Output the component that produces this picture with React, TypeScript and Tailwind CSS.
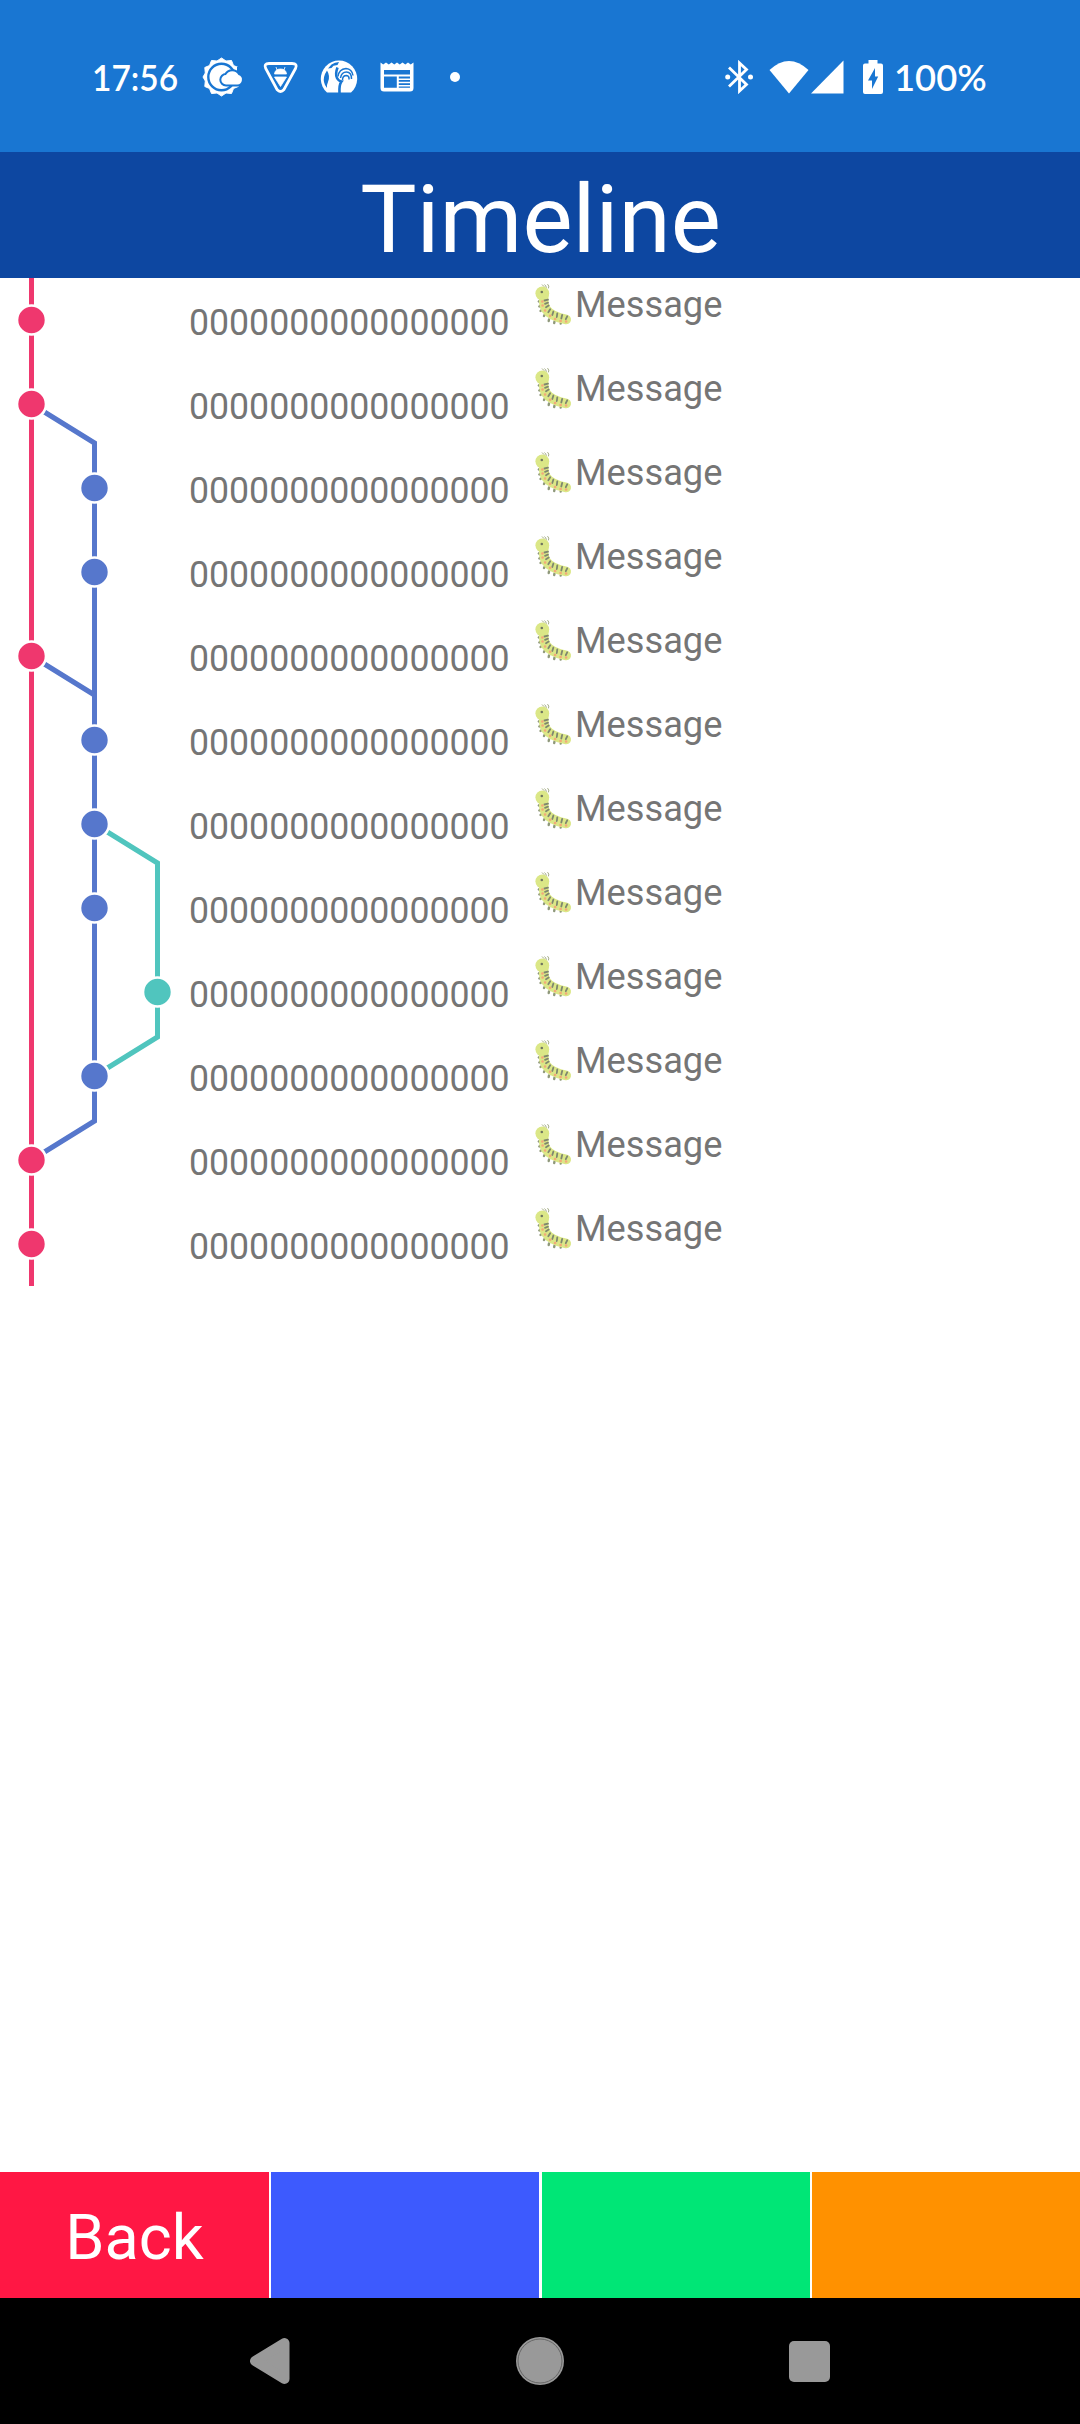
import React from "react";

const PINK = "#ef376e";
const BLUE = "#5677cc";
const TEAL = "#50c5be";

const LANES = [31.5, 94.5, 157.5];
const ROW = 84;

const commits = [
  { lane: 0, color: PINK },
  { lane: 0, color: PINK },
  { lane: 1, color: BLUE },
  { lane: 1, color: BLUE },
  { lane: 0, color: PINK },
  { lane: 1, color: BLUE },
  { lane: 1, color: BLUE },
  { lane: 1, color: BLUE },
  { lane: 2, color: TEAL },
  { lane: 1, color: BLUE },
  { lane: 0, color: PINK },
  { lane: 0, color: PINK },
];

function Graph() {
  return (
    <svg width="189" height="1008" viewBox="0 0 189 1008" className="shrink-0" fill="none" strokeWidth="5">
      <path d="M31.5 0V1008" stroke={PINK} />
      <path d="M31.5 126L94.5 165V843L31.5 882" stroke={BLUE} />
      <path d="M31.5 378L94.5 417V440" stroke={BLUE} />
      <path d="M94.5 546L157.5 585V759L94.5 798" stroke={TEAL} />
      {commits.map((c, i) => (
        <circle key={i} cx={LANES[c.lane]} cy={i * ROW + 42} r="14.5" fill={c.color} stroke="#fff" strokeWidth="2.6" />
      ))}
    </svg>
  );
}

function Caterpillar() {
  return (
    <svg width="55" height="52" viewBox="0 0 55 52" className="shrink-0" fill="none" strokeLinecap="round">
      <path d="M24 8.5L22.3 6.8M26.3 9.5Q26.3 7.5 24.8 6.8M28.6 10Q29.6 8 27.800 6.4" stroke="#a5ad88" strokeWidth="1" />
      <path d="M19.3 23l-.5.5M19.8 28l-.5.5M21 32.5l-.5.5M24.5 37l-.5 1M29 41.5l-.3 1.5M34.5 43.5l-.3 1.5M41 44.5l-.3 1" stroke="#8f987b" strokeWidth="2.4" />
      <path d="M24 16C23.3 22 23.5 27 25.8 31C29.5 36.500 36 39.500 46.200 41.500" stroke="#dbe787" strokeWidth="9.600" />
      <circle cx="22.3" cy="15.3" r="6.9" fill="#dbe787" />
      <path d="M24.500 22.500L28 21.700M25 25.800L28 24.700M26 29.200L28.700 27.500M28.300 34.300L30.200 31.200M32.300 37L33.400 33.500M36.800 39L37.300 35.300M41.300 40.500L42.200 36.800M45.800 41.200L47.200 38.300" stroke="#7f876e" strokeWidth="1.800" />
      <path d="M22.300 23.500h.2M22.500 27.500h.2M25 32.500h.2M30 37.700h.2M35 41h.2M40.500 43h.2M46 43.500h.2" stroke="#f3aa79" strokeWidth="2.500" />
      <circle cx="21.800" cy="14" r="1.300" fill="#6f7560" />
    </svg>
  );
}

function WeatherIcon() {
  return (
    <svg width="42" height="42" viewBox="0 0 42 42" fill="none">
      <path
        d="M20.500 2l4.500 3 5.500-.5 2 5 4.700 2-.5 5.500L39 21l-2.300 4 .5 5.500-4.700 2-2 5-5.500-.5-4.500 3-4.500-3-5.500.5-2-5-4.700-2 .5-5.500L2 21l2.300-4-.5-5.500 4.700-2 2-5 5.500.5z"
        fill="#fff" stroke="#fff" strokeWidth="1" strokeLinejoin="round"
      />
      <circle cx="20.500" cy="21" r="13.200" fill="#fff" stroke="#1976d2" strokeWidth="2.400" />
      <path d="M36 11h6v19h-6z" fill="#1976d2" />
      <path d="M25 28.500a4.700 4.700 0 0 1 0-9.400 7 7 0 0 1 12.500 0 4.800 4.800 0 0 1-1.200 9.400z" fill="#fff" stroke="#1976d2" strokeWidth="4" />
      <path d="M25 28.500a4.700 4.700 0 0 1 0-9.400 7 7 0 0 1 12.500 0 4.800 4.800 0 0 1-1.200 9.400z" fill="#fff" />
    </svg>
  );
}

function ShieldIcon() {
  return (
    <svg width="36" height="34" viewBox="0 0 36 34" fill="none">
      <path d="M6 3.500h23q6 0 3.500 5L21 29.500q-3.500 4-7 0L2.700 8.500Q.5 3.500 6 3.500z" stroke="#fff" strokeWidth="2.800" />
      <path d="M11.500 14q.5-5 6-5t6 5zM11.500 17h12L17.500 26.500zM14 10l-1-3M21 10l1-3" fill="#fff" stroke="#fff" strokeWidth=".8" />
    </svg>
  );
}

function RoosterIcon() {
  return (
    <svg width="38" height="34" viewBox="0 0 38 34" fill="none">
      <path d="M7 32.500A18.200 18.200 0 1 1 31 32.500z" fill="#fff" />
      <path d="M7 10.500L5 14q-2.500 6 0 11l2 3q-.5-3 1-6 2.500-6-1-11.500z" fill="#1976d2" />
      <path d="M8 8.500l3.500-4L15 2.800l4-.8-1.500 3-4 .8-2 2.200z" fill="#1976d2" />
      <path d="M17.500 7.500Q15 14 17 18q1.500 3 4.500 3.500-2.500 3-2 11.500" stroke="#1976d2" strokeWidth="2.600" />
      <path d="M18 16.500q1-7.500 8-8 6 .5 7 7M20.500 18q1-6 6-6t5 7M22.500 20q0-4.500 4-4.500 3 .5 2.500 4" stroke="#1976d2" strokeWidth="1.500" />
    </svg>
  );
}

function NewsIcon() {
  return (
    <svg width="34" height="32" viewBox="0 0 34 32" fill="none">
      <path d="M.5 1.500l2.700 2 2.800-2 2.800 2 2.800-2 2.700 2 2.700-2 2.700 2 2.800-2 2.800 2 2.700-2 2.700 2 2.800-2V27q0 3.500-3.500 3.500H4Q.5 30.500.5 27z" fill="#fff" />
      <path d="M4 9h26v4.500H4zM4 15.500h12.800v11.300H4zM18.800 15.500H30v2H18.800zM18.800 19H30v1.700H18.800zM18.800 22.200H30v1.700H18.800zM18.800 25.400H30v1.400H18.800z" fill="#1976d2" />
    </svg>
  );
}

function StatusBar() {
  return (
    <div className="flex h-[152px] items-start justify-between bg-[#1976d2] pr-[91px] pl-[92px] font-['Lato',sans-serif] text-white">
      <div className="flex h-[154px] items-center">
        <div className="w-[87px] text-[36px] leading-[40px] whitespace-nowrap">
          <span className="inline-block origin-left scale-x-[0.93] font-semibold">17:56</span>
        </div>
        <div className="ml-[22px]"><WeatherIcon /></div>
        <div className="ml-[20px]"><ShieldIcon /></div>
        <div className="ml-[21px]"><RoosterIcon /></div>
        <div className="ml-[22px]"><NewsIcon /></div>
        <div className="ml-[36px] size-[10px] rounded-full bg-white" />
      </div>
      <div className="flex h-[154px] items-center">
        <svg width="28" height="34" viewBox="0 0 28 34" fill="none" stroke="#fff" strokeWidth="2.800">
          <path d="M4 7.500L21.500 24.500l-7 6.500V3L21.500 9.500 4 26.500" />
          <circle cx="2.700" cy="17" r="2.500" fill="#fff" stroke="none" />
          <circle cx="25.500" cy="17" r="2.500" fill="#fff" stroke="none" />
        </svg>
        <svg width="40" height="34" viewBox="0 0 40 34" className="ml-[16px]">
          <path d="M.5 10Q20-8 39.500 10L20 33.500z" fill="#fff" />
        </svg>
        <svg width="33" height="34" viewBox="0 0 33 34" className="ml-[2px]">
          <path d="M32.500.5V33.500H0z" fill="#fff" />
        </svg>
        <svg width="20" height="34" viewBox="0 0 20 34" className="ml-[19px]">
          <path d="M5.500 0h9v3.500H18q2 0 2 2V32q0 2-2 2H2q-2 0-2-2V5.500q0-2 2-2h3.500z" fill="#fff" />
          <path d="M12 8L5 20.500h4V29l6.200-12.500H12z" fill="#1976d2" />
        </svg>
        <div className="ml-[11px] w-[95px] text-[36px] leading-[40px] font-semibold whitespace-nowrap">
          <span className="inline-block origin-left scale-x-[1.01]">100%</span>
        </div>
      </div>
    </div>
  );
}

export default function App() {
  return (
    <div className="flex h-[2424px] w-[1080px] flex-col overflow-hidden bg-white font-['Roboto',sans-serif]">
      <StatusBar />
      <header className="h-[126px] bg-[#0d47a1] pl-[1px] text-center text-[94.5px] leading-[135px] text-white">Timeline</header>
      <main className="flex flex-1 items-start">
        <Graph />
        <ul className="flex flex-col text-[36.75px] leading-[43px] text-[#757575]">
          {commits.map((_, i) => (
            <li key={i} className="flex h-[84px] items-start">
              <div className="w-[331px] pt-[23px]">
                <span className="inline-block origin-left scale-x-[0.97]">0000000000000000</span>
              </div>
              <Caterpillar />
              <div className="pt-[5px]">
                <span className="inline-block origin-left scale-x-[0.985]">Message</span>
              </div>
            </li>
          ))}
        </ul>
      </main>
      <footer className="flex h-[126px] text-center text-[63px] leading-[132px] text-white">
        <button className="w-[269px] bg-[#ff1744]">Back</button>
        <button className="ml-[2px] w-[268px] bg-[#3d5afe]" />
        <button className="ml-[3px] w-[268px] bg-[#00e676]" />
        <button className="ml-[2px] w-[268px] bg-[#ff9100]" />
      </footer>
      <nav className="flex h-[126px] items-center bg-black">
        <svg width="42" height="48" viewBox="0 0 42 48" className="ml-[249px]">
          <path d="M6 24L35.500 6V42z" fill="#999" stroke="#999" strokeWidth="10" strokeLinejoin="round" />
        </svg>
        <svg width="48" height="48" viewBox="0 0 48 48" className="ml-[225px]">
          <circle cx="24" cy="24" r="24" fill="#999" />
          <circle cx="24" cy="24" r="22" fill="none" stroke="#666" strokeWidth="1" />
        </svg>
        <div className="ml-[225px] size-[41px] rounded-[5px] bg-[#999]" />
      </nav>
    </div>
  );
}
